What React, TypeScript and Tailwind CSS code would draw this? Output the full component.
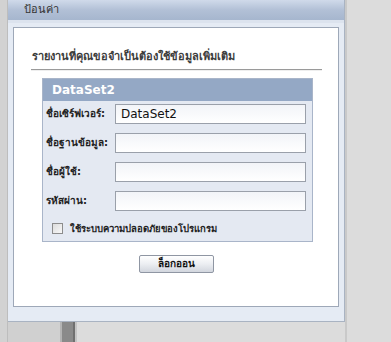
import React from "react";

const font = { fontFamily: 'Tahoma, "DejaVu Sans", "Noto Sans", sans-serif' };

function Field({ label, value }: { label: string; value?: string }) {
  return (
    <div className="flex items-center h-[20px]">
      <div className="w-[72px] pl-[3px] text-[10px] font-bold text-[#222] whitespace-nowrap">{label}</div>
      <div className="w-[191px] h-[20px] border border-[#9aa0aa] bg-gradient-to-b from-[#f2f4f8] to-white flex items-center pl-[5px] text-[12px] text-[#111]">
        {value}
      </div>
    </div>
  );
}

export default function App() {
  return (
    <div className="w-[391px] h-[342px] bg-[#dcdcdc] flex overflow-hidden" style={font}>
      <div className="w-[8px] h-full bg-[#d2d2d2] border-r border-[#bdbdbd]" />
      <div className="w-[337px] flex flex-col">
        <div className="h-[322px] bg-[#e5ebf4] border border-t-0 border-l-0 border-[#a9b3c2] flex flex-col">
          <div className="h-[23px] bg-gradient-to-b from-[#d0daea] via-[#b2c0d6] to-[#a6b6ce] border-b-[3px] border-[#dce3ee] flex items-center pl-[16px] pt-[1px] text-[11px] text-[#333]">
            ป้อนค่า
          </div>
          <div className="ml-[5px] mr-[5px] mt-[4px] h-[280px] bg-white border border-[#9ea8b8] flex flex-col">
            <div className="pl-[18px] pt-[21px] text-[11px] font-bold text-[#3c3c3c]">
              รายงานที่คุณขอจำเป็นต้องใช้ข้อมูลเพิ่มเติม
            </div>
            <div className="ml-[17px] mt-[3px] w-[291px] h-[2px] border-t border-[#9a9a9a] border-b border-b-[#eeeeee]" />
            <div className="ml-[28px] mt-[7px] w-[271px] flex flex-col">
              <div className="w-[271px] h-[164px] border border-[#a9b5c9] bg-[#e4e9f2] flex flex-col">
                <div className="h-[22px] bg-[#94a8c5] flex items-center pl-[9px] text-[12px] font-bold text-white">
                  DataSet2
                </div>
                <div className="flex flex-col gap-[9px] pt-[3px]">
                  <Field label="ชื่อเซิร์ฟเวอร์:" value="DataSet2" />
                  <Field label="ชื่อฐานข้อมูล:" />
                  <Field label="ชื่อผู้ใช้:" />
                  <Field label="รหัสผ่าน:" />
                </div>
                <div className="flex items-center mt-[11px] pl-[9px]">
                  <div className="w-[11px] h-[11px] border border-[#8c8c8c] bg-gradient-to-br from-[#dcdcdc] to-[#f8f8f8]" />
                  <div className="ml-[7px] text-[9.5px] font-bold text-[#222]">ใช้ระบบความปลอดภัยของโปรแกรม</div>
                </div>
              </div>
              <div className="flex justify-center mt-[13px] pr-[2px]">
                <div className="w-[75px] h-[18px] border border-[#8f96a3] rounded-[2px] bg-gradient-to-b from-white via-[#eceef2] to-[#d2d6de] flex items-center justify-center text-[10px] font-bold text-[#111]">
                  ล็อกออน
                </div>
              </div>
            </div>
          </div>
        </div>
        <div className="flex-1 flex">
          <div className="w-[52px] bg-[#d0d0d0]" />
          <div className="w-[2px] bg-[#b4b4b4]" />
          <div className="w-[11px] bg-[#8a8a8a]" />
          <div className="w-[2px] bg-[#707070]" />
          <div className="w-[2px] bg-[#c4c4c4]" />
        </div>
      </div>
      <div className="w-[2px] h-full bg-[#c9c9c9]" />
      <div className="flex-1 h-full bg-[#dcdcdc]" />
    </div>
  );
}
